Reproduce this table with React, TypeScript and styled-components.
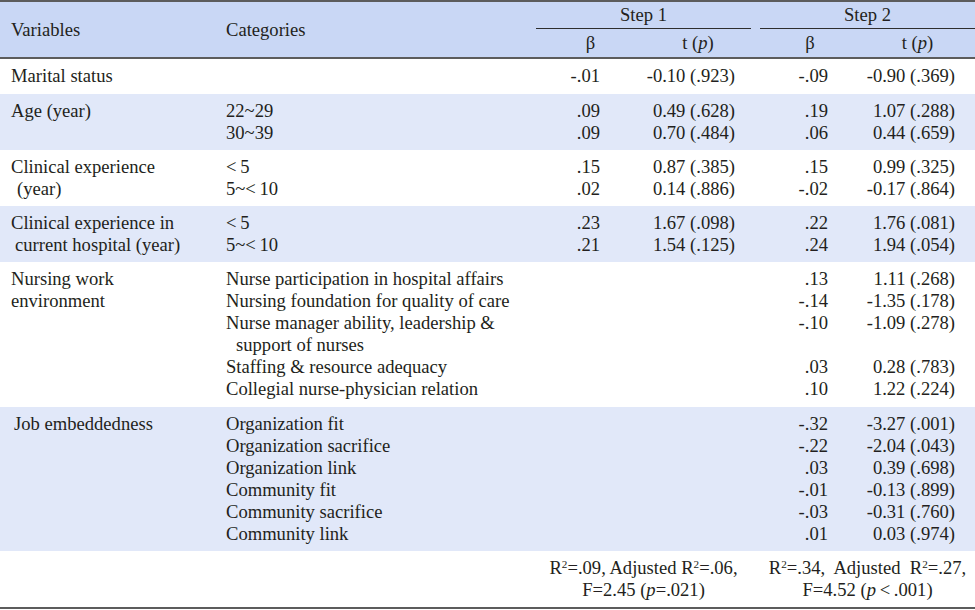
import React from "react";
import styled, { createGlobalStyle } from "styled-components";

const GlobalStyle = createGlobalStyle`
  html, body { margin: 0; padding: 0; background: #ffffff; }
  body {
    font-family: "Liberation Serif", "Times New Roman", serif;
    color: #231f20;
  }
`;

const COLS = "220px 316px 109px 106px 9px 100px 115px";

const Table = styled.div`
  width: 975px;
  border-top: 2px solid #5c5c5c;
  border-bottom: 2px solid #5c5c5c;
  font-size: 18.6px;
`;

const Header = styled.div`
  display: grid;
  grid-template-columns: ${COLS};
  grid-template-rows: 27px 28px;
  background: #c9d7f5;
  border-bottom: 2px solid #5c5c5c;
`;

const HeadLabel = styled.div<{ $col: number; $pad?: number }>`
  grid-column: ${(p) => p.$col};
  grid-row: 1 / 3;
  align-self: center;
  padding-left: ${(p) => p.$pad ?? 0}px;
  line-height: 22px;
`;

const StepHead = styled.div<{ $cols: string }>`
  grid-column: ${(p) => p.$cols};
  grid-row: 1;
  text-align: center;
  line-height: 26px;
  border-bottom: 1px solid #2e2e2e;
`;

const SubHead = styled.div<{ $col: number }>`
  grid-column: ${(p) => p.$col};
  grid-row: 2;
  text-align: center;
  line-height: 28px;
`;

const Group = styled.div<{ $shade?: boolean; $pb?: number }>`
  display: grid;
  grid-template-columns: ${COLS};
  grid-auto-rows: auto;
  padding: 6px 0 ${(p) => p.$pb ?? 6}px;
  background: ${(p) => (p.$shade ? "#e1e8f9" : "#ffffff")};
  line-height: 22px;
`;

const VarCell = styled.div<{ $indent?: number }>`
  grid-column: 1;
  grid-row: 1 / span 20;
  padding-left: ${(p) => 11 + (p.$indent ?? 0)}px;
`;

const Hang = styled.div<{ $indent: number }>`
  padding-left: ${(p) => p.$indent}px;
`;

const CatCell = styled.div<{ $row: number }>`
  grid-column: 2;
  grid-row: ${(p) => p.$row};
  padding-left: 6px;
  white-space: nowrap;
`;

const NumCell = styled.div<{ $col: number; $row: number; $pr: number }>`
  grid-column: ${(p) => p.$col};
  grid-row: ${(p) => p.$row};
  text-align: right;
  padding-right: ${(p) => p.$pr}px;
  white-space: nowrap;
`;

const Summary = styled.div<{ $cols: string }>`
  grid-column: ${(p) => p.$cols};
  grid-row: 1;
  text-align: center;
  white-space: nowrap;
`;

const It = styled.i`
  font-style: italic;
`;

const Sup = styled.sup`
  font-size: 0.6em;
  line-height: 0;
  vertical-align: 0.55em;
`;

type Row = {
  cat?: React.ReactNode;
  b1?: string;
  t1?: string;
  b2?: string;
  t2?: string;
};

type GroupData = {
  vars: React.ReactNode;
  varIndent?: number;
  shade?: boolean;
  pb?: number;
  rows: Row[];
};

const lt = "<\u2009";

const groups: GroupData[] = [
  {
    vars: "Marital status",
    pb: 7,
    rows: [{ b1: "-.01", t1: "-0.10 (.923)", b2: "-.09", t2: "-0.90 (.369)" }],
  },
  {
    vars: "Age (year)",
    shade: true,
    rows: [
      { cat: "22~29", b1: ".09", t1: "0.49 (.628)", b2: ".19", t2: "1.07 (.288)" },
      { cat: "30~39", b1: ".09", t1: "0.70 (.484)", b2: ".06", t2: "0.44 (.659)" },
    ],
  },
  {
    vars: (
      <>
        <div>Clinical experience</div>
        <Hang $indent={6}>(year)</Hang>
      </>
    ),
    rows: [
      { cat: lt + "5", b1: ".15", t1: "0.87 (.385)", b2: ".15", t2: "0.99 (.325)" },
      { cat: "5~" + lt + "10", b1: ".02", t1: "0.14 (.886)", b2: "-.02", t2: "-0.17 (.864)" },
    ],
  },
  {
    vars: (
      <>
        <div>Clinical experience in</div>
        <Hang $indent={4}>current hospital (year)</Hang>
      </>
    ),
    shade: true,
    rows: [
      { cat: lt + "5", b1: ".23", t1: "1.67 (.098)", b2: ".22", t2: "1.76 (.081)" },
      { cat: "5~" + lt + "10", b1: ".21", t1: "1.54 (.125)", b2: ".24", t2: "1.94 (.054)" },
    ],
  },
  {
    vars: (
      <>
        <div>Nursing work</div>
        <div>environment</div>
      </>
    ),
    pb: 7,
    rows: [
      { cat: "Nurse participation in hospital affairs", b2: ".13", t2: "1.11 (.268)" },
      { cat: "Nursing foundation for quality of care", b2: "-.14", t2: "-1.35 (.178)" },
      {
        cat: (
          <>
            <div>Nurse manager ability, leadership &amp;</div>
            <Hang $indent={10}>support of nurses</Hang>
          </>
        ),
        b2: "-.10",
        t2: "-1.09 (.278)",
      },
      { cat: "Staffing & resource adequacy", b2: ".03", t2: "0.28 (.783)" },
      { cat: "Collegial nurse-physician relation", b2: ".10", t2: "1.22 (.224)" },
    ],
  },
  {
    vars: "Job embeddedness",
    varIndent: 3,
    shade: true,
    rows: [
      { cat: "Organization fit", b2: "-.32", t2: "-3.27 (.001)" },
      { cat: "Organization sacrifice", b2: "-.22", t2: "-2.04 (.043)" },
      { cat: "Organization link", b2: ".03", t2: "0.39 (.698)" },
      { cat: "Community fit", b2: "-.01", t2: "-0.13 (.899)" },
      { cat: "Community sacrifice", b2: "-.03", t2: "-0.31 (.760)" },
      { cat: "Community link", b2: ".01", t2: "0.03 (.974)" },
    ],
  },
];

export default function App() {
  return (
    <>
      <GlobalStyle />
      <Table>
        <Header>
          <HeadLabel $col={1} $pad={11}>Variables</HeadLabel>
          <HeadLabel $col={2} $pad={6}>Categories</HeadLabel>
          <StepHead $cols="3 / 5">Step 1</StepHead>
          <StepHead $cols="6 / 8">Step 2</StepHead>
          <SubHead $col={3}>β</SubHead>
          <SubHead $col={4}>
            t (<It>p</It>)
          </SubHead>
          <SubHead $col={6}>β</SubHead>
          <SubHead $col={7}>
            t (<It>p</It>)
          </SubHead>
        </Header>
        {groups.map((g, gi) => (
          <Group key={gi} $shade={g.shade} $pb={g.pb}>
            <VarCell $indent={g.varIndent}>{g.vars}</VarCell>
            {g.rows.map((r, ri) => (
              <React.Fragment key={ri}>
                <CatCell $row={ri + 1}>{r.cat ?? "\u00a0"}</CatCell>
                {r.b1 && (
                  <NumCell $col={3} $row={ri + 1} $pr={45}>
                    {r.b1}
                  </NumCell>
                )}
                {r.t1 && (
                  <NumCell $col={4} $row={ri + 1} $pr={16}>
                    {r.t1}
                  </NumCell>
                )}
                {r.b2 && (
                  <NumCell $col={6} $row={ri + 1} $pr={32}>
                    {r.b2}
                  </NumCell>
                )}
                {r.t2 && (
                  <NumCell $col={7} $row={ri + 1} $pr={20}>
                    {r.t2}
                  </NumCell>
                )}
              </React.Fragment>
            ))}
          </Group>
        ))}
        <Group>
          <VarCell>{"\u00a0"}</VarCell>
          <Summary $cols="3 / 5">
            <div>
              R<Sup>2</Sup>=.09, Adjusted R<Sup>2</Sup>=.06,
            </div>
            <div>
              F=2.45 (<It>p</It>=.021)
            </div>
          </Summary>
          <Summary $cols="6 / 8">
            <div>
              R<Sup>2</Sup>=.34,&nbsp; Adjusted&nbsp; R<Sup>2</Sup>=.27,
            </div>
            <div>
              F=4.52 (<It>p</It>{"\u2009<\u2009"}.001)
            </div>
          </Summary>
        </Group>
      </Table>
    </>
  );
}
